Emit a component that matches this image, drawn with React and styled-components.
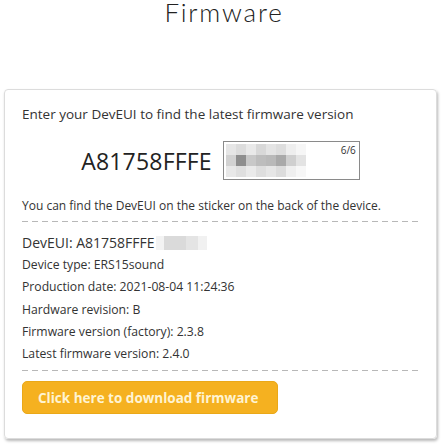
import styled, { createGlobalStyle } from 'styled-components';

const GlobalStyle = createGlobalStyle`
  body {
    margin: 0;
    background: #fff;
    font-family: "Open Sans", "Noto Sans", sans-serif;
    color: #333;
  }
`;

const Page = styled.div`
  width: 448px;
  height: 448px;
  overflow: hidden;
`;

const Title = styled.h1`
  margin: 0;
  text-align: center;
  font-family: Lato, "Open Sans", sans-serif;
  font-weight: 300;
  font-size: 26px;
  line-height: 24px;
  letter-spacing: 1.8px;
  color: #222;
`;

const Card = styled.div`
  margin: 65px 0 0 4px;
  width: 433px;
  height: 350px;
  box-sizing: border-box;
  border: 1px solid #dcdcdc;
  border-radius: 4px;
  box-shadow: 1px 2px 3px rgba(0, 0, 0, 0.28);
  padding: 15px 17px 0 17px;
`;

const Lead = styled.p`
  margin: 0;
  font-size: 13.5px;
  line-height: 18px;
  color: #333;
`;

const EntryRow = styled.div`
  display: flex;
  align-items: center;
  justify-content: center;
  gap: 11px;
  margin-top: 18px;
`;

const BigValue = styled.span`
  font-size: 23px;
  line-height: 30px;
  color: #222;
  letter-spacing: 0.2px;
`;

const Field = styled.div`
  position: relative;
  width: 133px;
  height: 37px;
  border: 1px solid #8a8a8a;
  display: flex;
  align-items: center;
  padding: 0 0 0 2px;
  overflow: hidden;
`;

const Counter = styled.span`
  position: absolute;
  top: 2px;
  right: 3px;
  font-size: 10px;
  line-height: 12px;
  color: #333;
`;

const Mosaic = styled.div`
  display: grid;
  grid-template-columns: repeat(9, 10px);
  grid-template-rows: repeat(3, 11px);
`;

const Tile = styled.span`
  background: ${(p) => p.$shade};
`;

const Hint = styled.p`
  margin: 18px 0 0;
  font-size: 12px;
  line-height: 16px;
  color: #333;
`;

const Dashed = styled.div`
  height: 1px;
  width: 399px;
  margin: ${(p) => p.$margin};
  background: repeating-linear-gradient(
    to right,
    #b8b8b8 0 6px,
    transparent 6px 10px
  );
`;

const Details = styled.div`
  display: flex;
  flex-direction: column;
`;

const Line = styled.div`
  display: flex;
  align-items: center;
  font-size: ${(p) => (p.$large ? '14px' : '12.2px')};
  line-height: 22.2px;
  color: #333;
`;

const Smudge = styled.span`
  display: inline-block;
  width: 51px;
  height: 14px;
  margin-left: 1px;
  background: linear-gradient(
    to right,
    #f3f3f3 0 8px,
    #dadada 8px 30px,
    #e4e4e4 30px 42px,
    #f1f1f1 42px
  );
`;

const DownloadButton = styled.button`
  display: block;
  margin-top: 10px;
  width: 256px;
  height: 33px;
  border: 1px solid #eaa818;
  border-radius: 5px;
  background: #f5b120;
  color: #fff4d2;
  font-family: "Open Sans", "Noto Sans", sans-serif;
  font-weight: 700;
  font-size: 13.5px;
  text-align: left;
  padding: 0 0 0 15px;
  cursor: pointer;
`;

const shades = [
  '#e6e6e6', '#dcdcdc', '#e9e9e9', '#d8d8d8', '#e4e4e4', '#dddddd', '#eeeeee', '#f6f6f6', '#fff',
  '#d2d2d2', '#8e8e8e', '#c8c8c8', '#bdbdbd', '#b9b9b9', '#a9a9a9', '#cfcfcf', '#e3e3e3', '#fff',
  '#e8e8e8', '#dfdfdf', '#eaeaea', '#dedede', '#e6e6e6', '#dcdcdc', '#efefef', '#f7f7f7', '#fff',
];

const details = [
  'Device type: ERS15sound',
  'Production date: 2021-08-04 11:24:36',
  'Hardware revision: B',
  'Firmware version (factory): 2.3.8',
  'Latest firmware version: 2.4.0',
];

export default function App() {
  return (
    <Page>
      <GlobalStyle />
      <Title>Firmware</Title>
      <Card>
        <Lead>Enter your DevEUI to find the latest firmware version</Lead>
        <EntryRow>
          <BigValue>A81758FFFE</BigValue>
          <Field>
            <Mosaic>
              {shades.map((s, i) => (
                <Tile key={i} $shade={s} />
              ))}
            </Mosaic>
            <Counter>6/6</Counter>
          </Field>
        </EntryRow>
        <Hint>You can find the DevEUI on the sticker on the back of the device.</Hint>
        <Dashed $margin="7px 0 10px" />
        <Details>
          <Line $large>
            DevEUI: A81758FFFE<Smudge />
          </Line>
          {details.map((d) => (
            <Line key={d}>{d}</Line>
          ))}
        </Details>
        <Dashed $margin="5px 0 0" />
        <DownloadButton>Click here to download firmware</DownloadButton>
      </Card>
    </Page>
  );
}
